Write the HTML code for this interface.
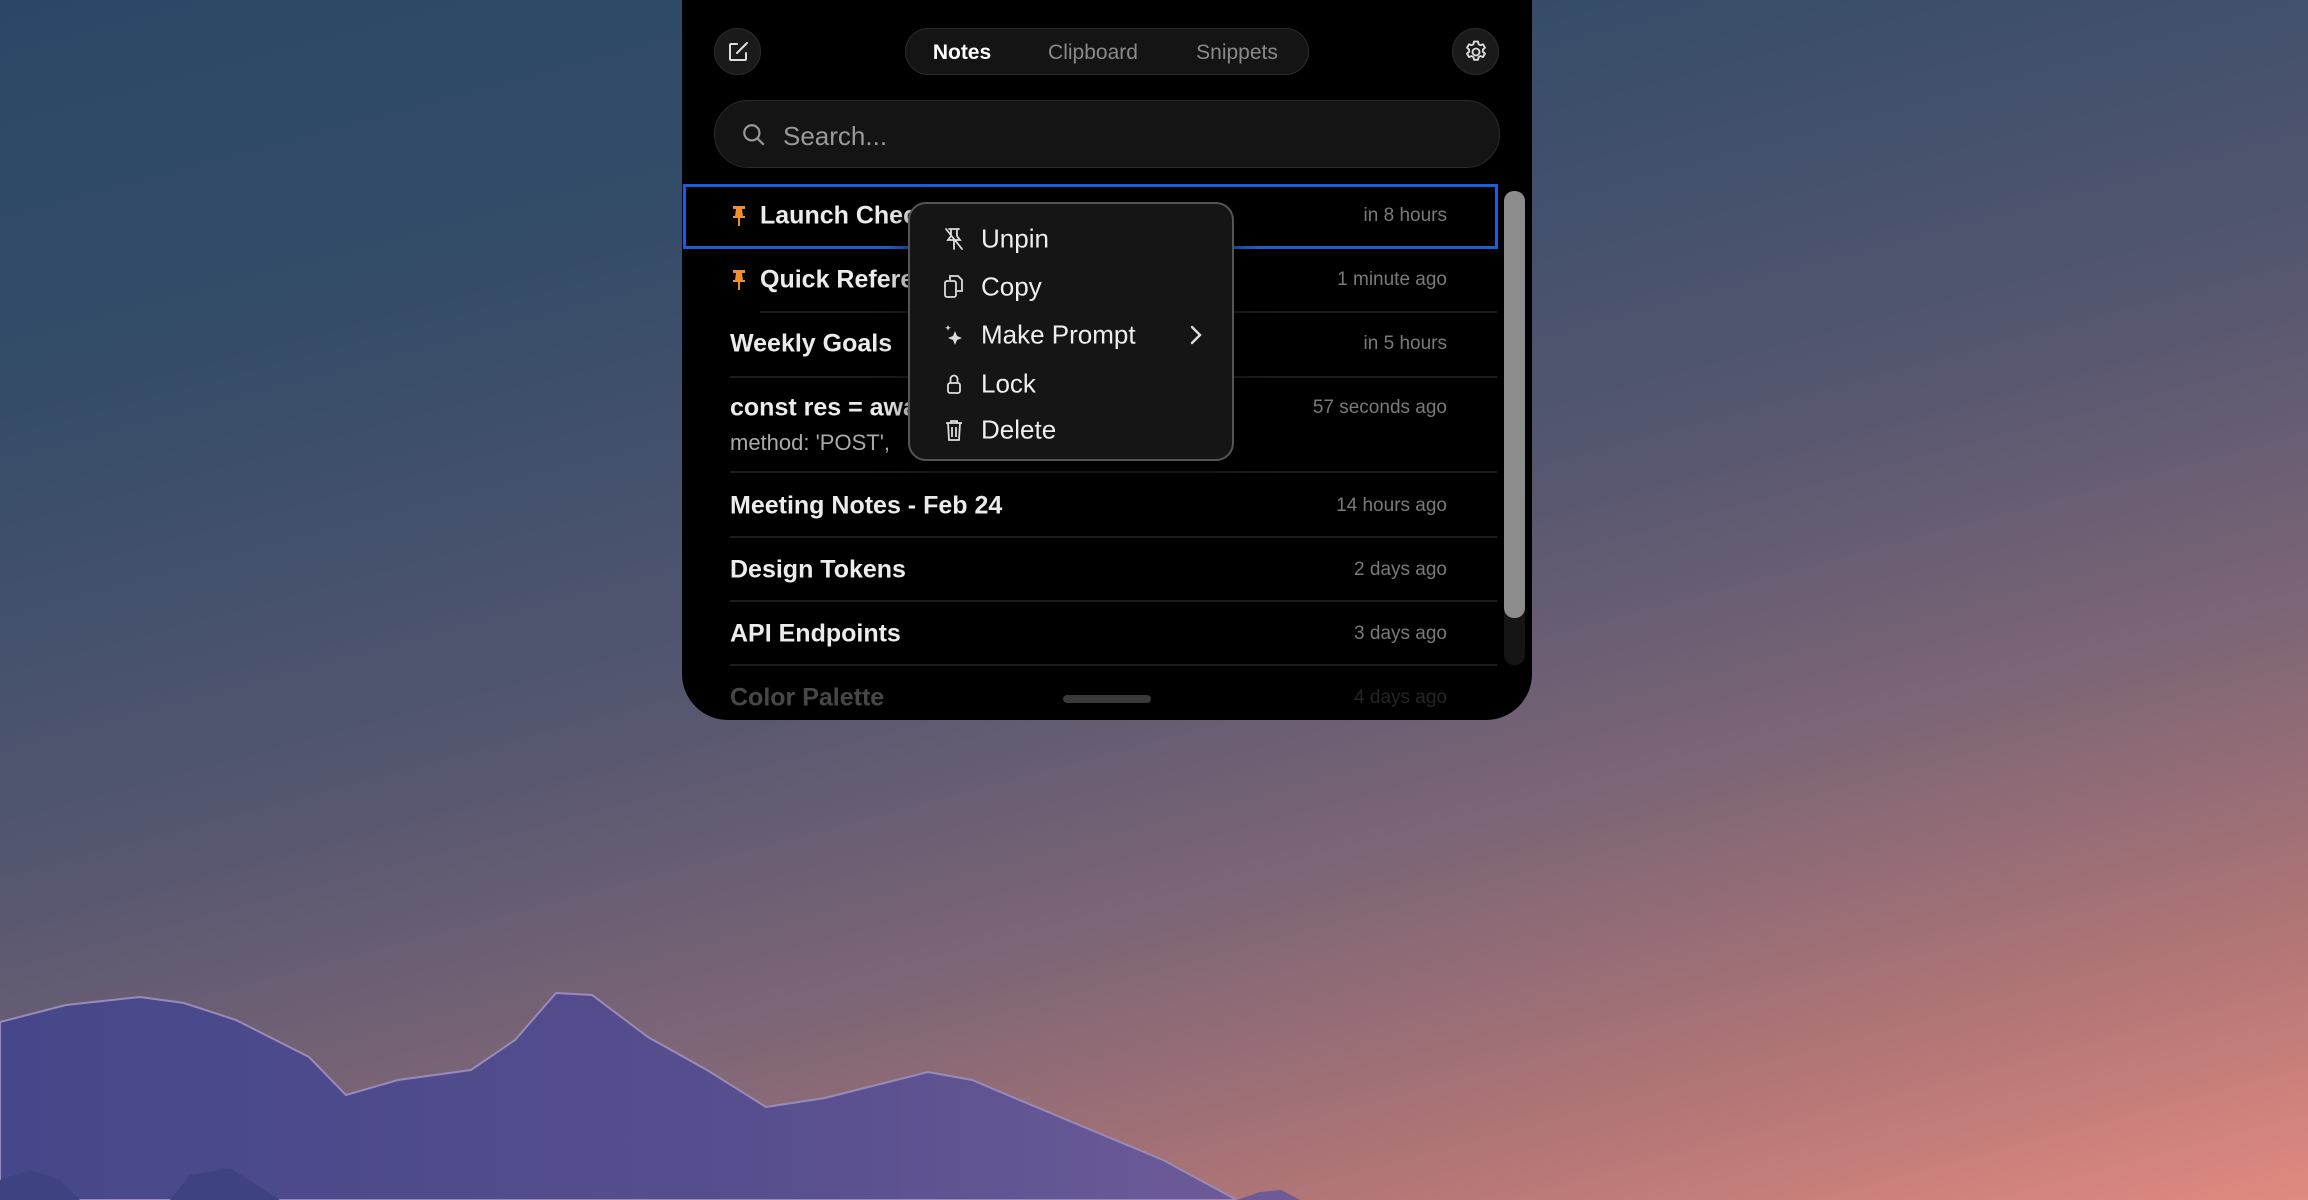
<!DOCTYPE html>
<html><head><meta charset="utf-8"><style>
*{margin:0;padding:0;box-sizing:border-box}
body{width:2308px;height:1200px;overflow:hidden;position:relative;font-family:"Liberation Sans",sans-serif;
background:linear-gradient(165deg,#2a4866 0%,#344c68 22%,#545670 48%,#7e6676 68%,#b47676 86%,#e08a80 100%);}
#bg{position:absolute;left:0;top:0}
.panel{position:absolute;left:682px;top:0;width:850px;height:720px;background:#000;border-radius:0 0 46px 46px;overflow:hidden}
.circ{position:absolute;width:47px;height:47px;border-radius:50%;background:#1a1a1a;border:1px solid #2c2c2c;display:flex;align-items:center;justify-content:center}
.tabs{position:absolute;left:223px;top:28px;width:404px;height:47px;border-radius:24px;background:#141414;border:1px solid #2c2c2c;font-size:21px;color:#8a8a8a}
.tabs span{position:absolute;top:12px;transform:translateX(-50%)}
.search{position:absolute;left:32px;top:100px;width:786px;height:68px;border-radius:34px;background:#141414;border:1.5px solid #2a2a2a}
.search span{position:absolute;left:68px;top:20px;font-size:26px;color:#9a9a9a}
.row{position:absolute;left:48px;width:767px;font-size:25px;font-weight:bold;color:#ececec}
.row .t{position:absolute;top:0;transform:translateY(-50%);white-space:nowrap}
.row .tm{position:absolute;right:50px;transform:translateY(-50%);font-size:19px;font-weight:normal;color:#7a7a7a;white-space:nowrap}
.sep{position:absolute;height:1.5px;background:#1c1c1c;right:35px}
.sel{position:absolute;left:1px;top:184px;width:815px;height:65px;border:3px solid #1a5fd6}
.menu{position:absolute;left:908px;top:202px;width:326px;height:259px;border-radius:18px;background:#151515;border:2px solid #555;box-shadow:0 10px 30px rgba(0,0,0,.6)}
.mi{position:absolute;left:71px;font-size:26px;color:#eee;transform:translateY(-50%)}
.ic{position:absolute;left:33px;transform:translateY(-50%)}
.pin{position:absolute;left:0;transform:translateY(-50%)}
</style></head><body>
<svg id="bg" width="2308" height="1200">
<defs><linearGradient id="m" x1="0" y1="0" x2="1" y2="0"><stop offset="0" stop-color="#45478a"/><stop offset="0.6" stop-color="#564e8e"/><stop offset="1" stop-color="#6d5a98"/></linearGradient></defs>
<path d="M0 1022 L66 1005 L140 997 L184 1003 L236 1020 L309 1057 L346 1095 L398 1080 L471 1070 L515 1040 L556 993 L592 995 L648 1037 L707 1070 L766 1107 L825 1098 L928 1072 L972 1080 L1060 1117 L1163 1160 L1237 1200 L0 1200 Z" fill="url(#m)" stroke="#9a8ab8" stroke-width="2"/>
<path d="M1237 1200 L1260 1192 L1281 1190 L1300 1200Z" fill="#6f5a98"/>
<path d="M0 1180 L30 1170 L60 1180 L80 1200 L0 1200Z M170 1200 L190 1175 L230 1168 L280 1200Z" fill="#3e4280"/>
</svg>
<div class="panel">
 <div class="circ" style="left:32px;top:28px"><svg width="24" height="24" viewBox="0 0 24 24" fill="none" stroke="#ddd" stroke-width="2" stroke-linecap="round"><path d="M11 4H5a1 1 0 0 0-1 1v14a1 1 0 0 0 1 1h14a1 1 0 0 0 1-1v-6"/><path d="M21 3L11 13"/></svg></div>
 <div class="tabs"><span style="left:56px;color:#fff;font-weight:bold">Notes</span><span style="left:187px">Clipboard</span><span style="left:331px">Snippets</span></div>
 <div class="circ" style="left:770px;top:28px"><svg width="28" height="28" viewBox="0 0 24 24" fill="none" stroke="#ddd" stroke-width="1.6" stroke-linejoin="round"><circle cx="12" cy="12" r="3"/><path d="M10.3 3h3.4l.5 2.3 1.6.9 2.2-.8 1.7 2.9-1.8 1.6v1.9l1.8 1.6-1.7 2.9-2.2-.8-1.6.9-.5 2.3h-3.4l-.5-2.3-1.6-.9-2.2.8-1.7-2.9 1.8-1.6v-1.9L4.3 8.3 6 5.4l2.2.8 1.6-.9z"/></svg></div>
 <div class="search"><svg style="position:absolute;left:26px;top:21px" width="26" height="26" viewBox="0 0 24 24" fill="none" stroke="#999" stroke-width="2"><circle cx="10" cy="10" r="7"/><path d="M15 15l6 6"/></svg><span>Search...</span></div>

 <div class="sep" style="left:78px;top:311px"></div>
 <div class="sep" style="left:48px;top:376px"></div>
 <div class="sep" style="left:48px;top:471px"></div>
 <div class="sep" style="left:48px;top:536px"></div>
 <div class="sep" style="left:48px;top:600px"></div>
 <div class="sep" style="left:48px;top:664px"></div>

 <div class="sel"></div>
 <div class="row" style="top:216px"><svg class="pin" width="16" height="22" viewBox="0 0 16 22" fill="#f0902a" style="top:0;left:1px"><rect x="2" y="1" width="12" height="3"/><path d="M5 4h6l1 7h2v2H2v-2h2z"/><rect x="7" y="13" width="2" height="8"/></svg><span class="t" style="left:30px">Launch Checklist</span><span class="tm">in 8 hours</span></div>
 <div class="row" style="top:280px"><svg class="pin" width="16" height="22" viewBox="0 0 16 22" fill="#f0902a" style="top:0;left:1px"><rect x="2" y="1" width="12" height="3"/><path d="M5 4h6l1 7h2v2H2v-2h2z"/><rect x="7" y="13" width="2" height="8"/></svg><span class="t" style="left:30px">Quick Reference</span><span class="tm">1 minute ago</span></div>
 <div class="row" style="top:344px"><span class="t">Weekly Goals</span><span class="tm">in 5 hours</span></div>
 <div class="row" style="top:408px"><span class="t">const res = await fetch</span><span class="tm">57 seconds ago</span></div>
 <div class="row" style="top:443px"><span class="t" style="font-weight:normal;font-size:22px;color:#aaa">method: 'POST',</span></div>
 <div class="row" style="top:506px"><span class="t">Meeting Notes - Feb 24</span><span class="tm">14 hours ago</span></div>
 <div class="row" style="top:570px"><span class="t">Design Tokens</span><span class="tm">2 days ago</span></div>
 <div class="row" style="top:634px"><span class="t">API Endpoints</span><span class="tm">3 days ago</span></div>
 <div class="row" style="top:698px;opacity:.3"><span class="t">Color Palette</span><span class="tm">4 days ago</span></div>
 <div style="position:absolute;left:822px;top:191px;width:21px;height:474px;border-radius:10px;background:#151515"></div>
 <div style="position:absolute;left:822px;top:191px;width:21px;height:427px;border-radius:10px;background:#8c8c8c"></div>
 <div style="position:absolute;left:381px;top:695px;width:88px;height:8px;border-radius:4px;background:#3a3a3a"></div>
</div>
<div class="menu">
 <svg class="ic" style="top:35px" width="22" height="24" viewBox="0 0 22 24" fill="none" stroke="#ddd" stroke-width="1.8" stroke-linecap="round"><path d="M6 2h10M8 2v7l-3 4h12l-3-4V2M11 13v9M3 2l16 20"/></svg>
 <span class="mi" style="top:35px">Unpin</span>
 <svg class="ic" style="top:82px" width="22" height="26" viewBox="0 0 22 26" fill="none" stroke="#ddd" stroke-width="1.8"><path d="M7 7V3h8l4 4v11h-5"/><rect x="2" y="8" width="11" height="16" rx="2"/></svg>
 <span class="mi" style="top:83px">Copy</span>
 <svg class="ic" style="top:131px" width="22" height="24" viewBox="0 0 22 24" fill="#ddd"><path d="M12 8l2 5 5 2-5 2-2 5-2-5-5-2 5-2z"/><path d="M5 2l.8 2 2 .8-2 .8L5 7.6 4.2 5.6l-2-.8 2-.8z"/></svg>
 <span class="mi" style="top:131px">Make Prompt</span>
 <svg style="position:absolute;left:279px;top:120px" width="14" height="22" viewBox="0 0 14 22" fill="none" stroke="#ddd" stroke-width="2.4" stroke-linecap="round"><path d="M3 3l8 8-8 8"/></svg>
 <svg class="ic" style="top:180px" width="22" height="24" viewBox="0 0 22 24" fill="none" stroke="#ddd" stroke-width="1.8"><rect x="5" y="11" width="12" height="10" rx="2"/><path d="M7.5 11V7a3.5 3.5 0 0 1 7 0v4"/></svg>
 <span class="mi" style="top:180px">Lock</span>
 <svg class="ic" style="top:226px" width="22" height="24" viewBox="0 0 22 24" fill="none" stroke="#ddd" stroke-width="1.8"><path d="M3 5h16M8 5V3h6v2M5 5l1 17h10l1-17M9 9v10M13 9v10"/></svg>
 <span class="mi" style="top:226px">Delete</span>
</div>
</body></html>
